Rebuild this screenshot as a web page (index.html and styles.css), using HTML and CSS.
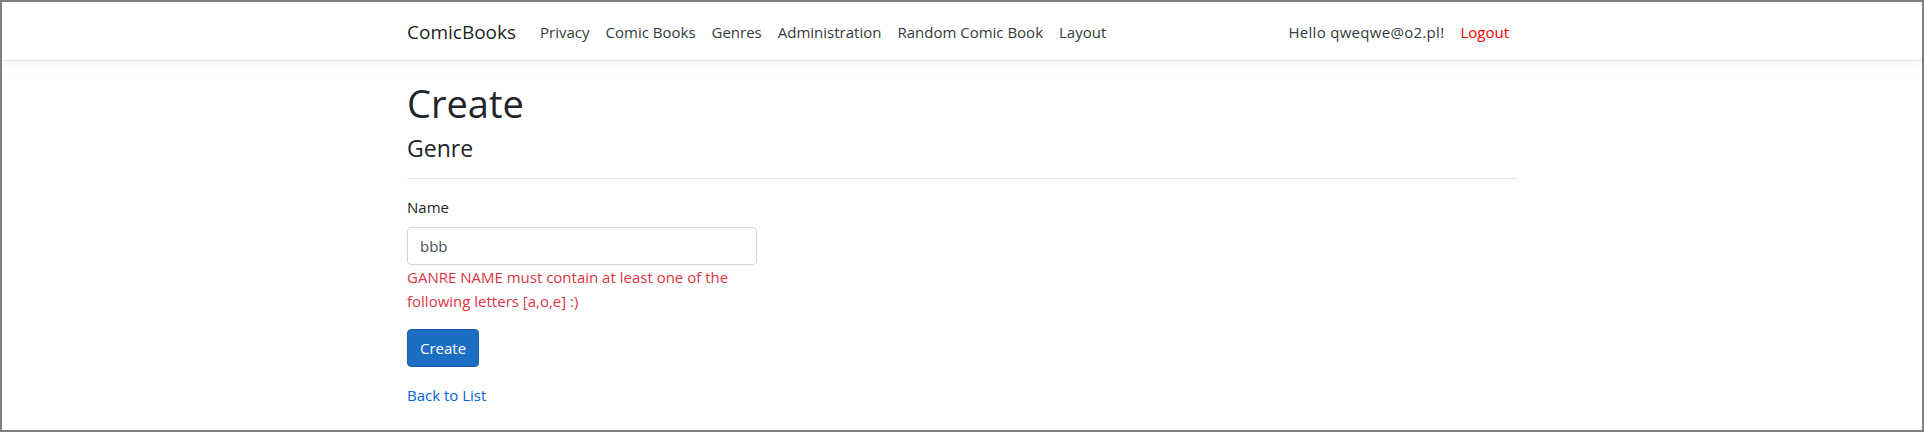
FILE: index.html
```html
<!DOCTYPE html>
<html lang="en">
<head>
<meta charset="utf-8">
<title>Create - ComicBooks</title>
<link rel="stylesheet" href="styles.css">
</head>
<body>
<div class="frame">
  <header>
    <nav class="navbar">
      <div class="container nav-inner">
        <a class="brand" href="#">ComicBooks</a>
        <ul class="nav-main">
          <li><a class="nav-link" href="#">Privacy</a></li>
          <li><a class="nav-link" href="#">Comic Books</a></li>
          <li><a class="nav-link" href="#">Genres</a></li>
          <li><a class="nav-link" href="#">Administration</a></li>
          <li><a class="nav-link" href="#">Random Comic Book</a></li>
          <li><a class="nav-link" href="#">Layout</a></li>
        </ul>
        <ul class="nav-user">
          <li><a class="nav-link hello" href="#">Hello qweqwe@o2.pl!</a></li>
          <li><button class="nav-link logout" type="button">Logout</button></li>
        </ul>
      </div>
    </nav>
  </header>
  <div class="container">
    <main class="main">
      <h1 class="title">Create</h1>
      <h4 class="subtitle">Genre</h4>
      <hr class="divider">
      <div class="row">
        <div class="col">
          <form class="form">
            <div class="form-group">
              <label class="label" for="name">Name</label>
              <input class="input" id="name" type="text" value="bbb">
              <span class="error">GANRE NAME must contain at least one of the following letters [a,o,e] :)</span>
            </div>
            <div class="form-group">
              <button class="btn" type="button">Create</button>
            </div>
          </form>
        </div>
      </div>
      <div class="back"><a class="link" href="#">Back to List</a></div>
    </main>
  </div>
</div>
</body>
</html>
```

FILE: styles.css
```css
* { box-sizing: border-box; }
html, body { margin: 0; padding: 0; }
body {
  font-family: "Open Sans", "Noto Sans", sans-serif;
  font-size: 15px;
  line-height: 24px;
  color: #212529;
  background: #fff;
}
.frame {
  height: 432px;
  border: 2px solid #808080;
  overflow: hidden;
  background: #fff;
}
.container {
  width: 1140px;
  margin: 0 auto;
  padding: 0 15px;
}
.navbar {
  background: #fff;
  border-bottom: 1px solid #e5e5e5;
  box-shadow: 0 4px 12px rgba(0,0,0,.05);
  padding: 10px 16px 8px;
  margin-bottom: 16px;
}
.nav-inner {
  display: flex;
  align-items: center;
}
.brand {
  font-size: 19px;
  line-height: 30px;
  padding: 5px 0;
  margin-right: 16px;
  color: rgba(0,0,0,.9);
  text-decoration: none;
}
.nav-main, .nav-user {
  display: flex;
  list-style: none;
  margin: 0;
  padding: 0;
}
.nav-main { flex: 1; }
.nav-link {
  display: block;
  padding: 8px;
  line-height: 24px;
  font-size: 15px;
  color: #343a40;
  text-decoration: none;
}
.hello { letter-spacing: 0.3px; }
.logout {
  border: 0;
  background: none;
  font-family: inherit;
  color: #ff0000;
  cursor: pointer;
}
.title {
  margin: 0 0 6px;
  padding-top: 1px;
  font-size: 38px;
  font-weight: 400;
  line-height: 50px;
}
.subtitle {
  margin: 0 0 8px;
  font-size: 23px;
  font-weight: 400;
  line-height: 28px;
}
.divider {
  margin: 16px 0;
  border: 0;
  border-top: 1px solid rgba(0,0,0,.1);
}
.row { display: flex; }
.col { width: 350px; }
.form { margin: 0; }
.form-group { margin-bottom: 16px; }
.label {
  display: inline-block;
  margin-bottom: 8px;
}
.input {
  display: block;
  width: 100%;
  height: 38px;
  padding: 6px 12px;
  font-family: inherit;
  font-size: 15px;
  line-height: 24px;
  color: #495057;
  background: #fff;
  border: 1px solid #ced4da;
  border-radius: 4px;
}
.error { color: #dc3545; }
.btn {
  display: inline-block;
  height: 38px;
  padding: 6px 12px;
  font-family: inherit;
  font-size: 15px;
  line-height: 24px;
  color: #fff;
  background: #1b6ec2;
  border: 1px solid #1861ac;
  border-radius: 4px;
}
.link {
  color: #0366d6;
  text-decoration: none;
}
```
